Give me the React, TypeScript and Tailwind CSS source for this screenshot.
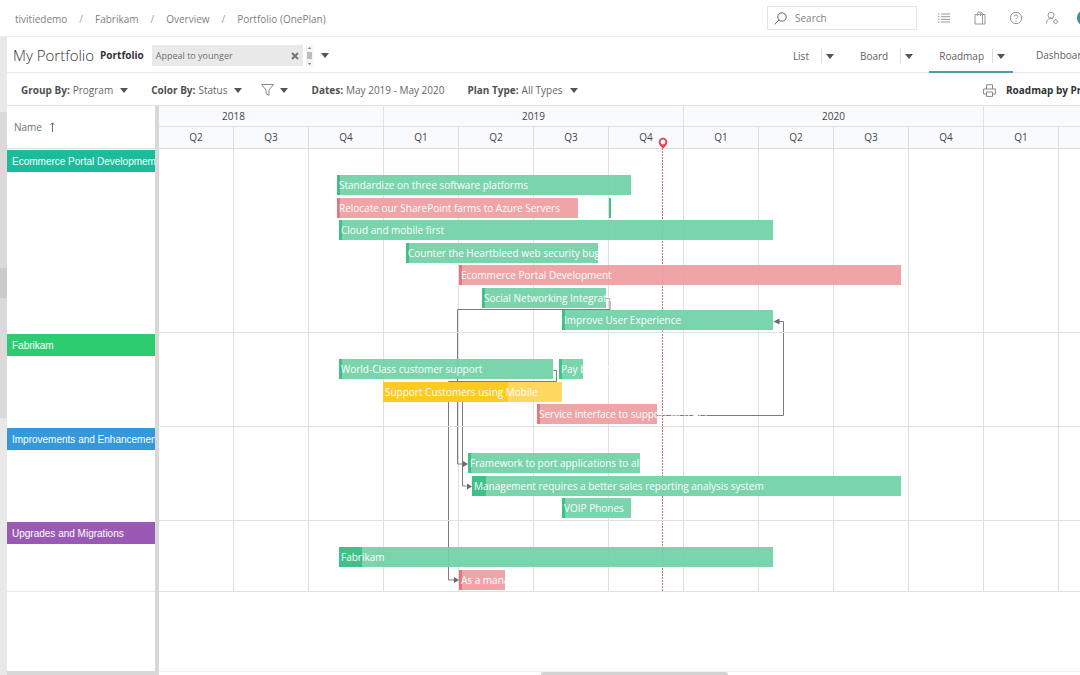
import type { ReactNode } from "react";

type Tone = "green" | "red" | "yellow";

interface Task {
  label: string;
  lane: number;
  start: number;
  end: number;
  tone: Tone;
  done?: number;
}

interface Group {
  name: string;
  header: string;
  height: string;
  offset: number;
  tasks: Task[];
}

const LANE = 22.5;

const tones: Record<Tone, { bar: string; done: string }> = {
  green: { bar: "bg-[#6fd0a5]/92", done: "bg-[#3fc088]" },
  red: { bar: "bg-[#ee9da0]/92", done: "bg-[#e2777c]" },
  yellow: { bar: "bg-[#ffd658]/95", done: "bg-[#fcc91d]/95" },
};

// start / end are timeline pixels, 75 to a quarter, counted from Q1 2018
const groups: Group[] = [
  {
    name: "Ecommerce Portal Developmemt",
    header: "bg-[#1abc9c]",
    height: "h-[184px]",
    offset: 26,
    tasks: [
      { label: "Standardize on three software platforms", lane: 0, start: 253, end: 547, tone: "green" },
      { label: "Relocate our SharePoint farms to Azure Servers", lane: 1, start: 253, end: 494, tone: "red" },
      { label: "", lane: 1, start: 525, end: 527, tone: "green", done: 2 },
      { label: "Cloud and mobile first", lane: 2, start: 255, end: 689, tone: "green" },
      { label: "Counter the Heartbleed web security bug", lane: 3, start: 322, end: 514, tone: "green" },
      { label: "Ecommerce Portal Development", lane: 4, start: 375, end: 817, tone: "red" },
      { label: "Social Networking Integration", lane: 5, start: 398, end: 522, tone: "green" },
      { label: "Improve User Experience", lane: 6, start: 478, end: 689, tone: "green" },
    ],
  },
  {
    name: "Fabrikam",
    header: "bg-[#2ecc71]",
    height: "h-[94px]",
    offset: 26,
    tasks: [
      { label: "World-Class customer support", lane: 0, start: 255, end: 469, tone: "green" },
      { label: "Pay by phone", lane: 0, start: 475, end: 499, tone: "green" },
      { label: "Support Customers using Mobile", lane: 1, start: 299, end: 478, tone: "yellow", done: 125 },
      { label: "Service interface to support web API", lane: 2, start: 453, end: 573, tone: "red" },
    ],
  },
  {
    name: "Improvements and Enhancements",
    header: "bg-[#3498db]",
    height: "h-[94px]",
    offset: 26,
    tasks: [
      { label: "Framework to port applications to all", lane: 0, start: 384, end: 556, tone: "green" },
      { label: "Management requires a better sales reporting analysis system", lane: 1, start: 388, end: 817, tone: "green", done: 14 },
      { label: "VOIP Phones", lane: 2, start: 478, end: 547, tone: "green" },
    ],
  },
  {
    name: "Upgrades and Migrations",
    header: "bg-[#9b59b6]",
    height: "h-[71px]",
    offset: 26,
    tasks: [
      { label: "Fabrikam", lane: 0, start: 255, end: 689, tone: "green", done: 23 },
      { label: "As a manager", lane: 1, start: 375, end: 421, tone: "red" },
    ],
  },
];

const years = ["2018", "2019", "2020", "2021"];
const quarters = ["Q1", "Q2", "Q3", "Q4"];

function Caret() {
  return (
    <svg viewBox="0 0 8 5" className="h-[5px] w-2 shrink-0 fill-[#555]">
      <path d="M0 0h8L4 5z" />
    </svg>
  );
}

function Breadcrumbs() {
  const crumbs = ["tivitiedemo", "Fabrikam", "Overview", "Portfolio (OnePlan)"];
  return (
    <nav className="flex items-center gap-3 pt-0.5 text-[10px] text-[#808080]">
      {crumbs.map((crumb, i) => (
        <span key={crumb} className="flex gap-3">
          {i > 0 ? <span className="text-[#a0a0a0]">/</span> : null}
          <a href="#">{crumb}</a>
        </span>
      ))}
    </nav>
  );
}

function IconButton({ label, children }: { label: string; children: ReactNode }) {
  return (
    <button type="button" aria-label={label} className="text-[#999]">
      <svg viewBox="0 0 14 14" className="size-[14px] overflow-visible" fill="none" stroke="currentColor">
        {children}
      </svg>
    </button>
  );
}

function TopBar() {
  return (
    <header className="flex h-9 shrink-0 items-center justify-between pl-[15px]">
      <Breadcrumbs />
      <div className="flex items-center">
        <label className="flex h-6 w-[150px] items-center gap-2 border border-[#e4e4e4] px-1.5">
          <svg viewBox="0 0 13 13" className="size-[13px] shrink-0" fill="none" stroke="#666" aria-hidden>
            <circle cx="8" cy="5" r="4.2" />
            <path d="M5 8 .6 12.4" />
          </svg>
          <input
            type="text"
            aria-label="Search"
            placeholder="Search"
            className="w-full min-w-0 text-[10px] outline-none placeholder:text-[#808080]"
          />
        </label>
        <div className="ml-5 flex items-center gap-[22px]">
          <IconButton label="Tasks">
            <path d="M1 3h1.5M4 3h9M1 5.700h1.500M4 5.700h9M1 8.400h1.500M4 8.400h9M1 11h1.500M4 11h9" />
          </IconButton>
          <IconButton label="Marketplace">
            <path d="M2 3.500h7.500v9.500H2zM9.500 3.500h2.500v9.500H9.500M4.500 5V2.500Q4.500 1 6 1t1.500 1.500V5M7.500 1Q9.500 1 9.500 3.500" />
          </IconButton>
          <IconButton label="Help">
            <circle cx="7" cy="7" r="5.700" />
            <path d="M5.200 5.600Q5.300 4 7 4t1.800 1.500Q8.800 6.400 7.700 7.100 7 7.600 7 8.400M7 9.400v1.100" />
          </IconButton>
          <IconButton label="User settings">
            <circle cx="6" cy="4.200" r="3" />
            <path d="M1.300 12.500Q1.800 7.400 6 7.300q1.300 0 2.300.7" />
            <circle cx="10.600" cy="10.600" r="1.800" />
            <path d="M10.600 8v1M10.600 12.200v1M8 10.600h1M12.200 10.600h1" />
          </IconButton>
          <span className="-ml-1 w-[3px] overflow-hidden">
            <span className="block size-4 rounded-full bg-[#3f8f95]" />
          </span>
        </div>
      </div>
    </header>
  );
}

function Tab({ name, active }: { name: string; active?: boolean }) {
  return (
    <div
      className={`-mb-px flex h-9 items-center border-b-2 pt-1 pr-2 pl-2.5 ${
        active ? "gap-2 border-[#4f9bb3]" : "gap-3 border-transparent"
      }`}
    >
      <button type="button">{name}</button>
      <button
        type="button"
        aria-label={`${name} views`}
        className="flex h-3.5 items-center border-l border-[#ddd] pl-1"
      >
        <Caret />
      </button>
    </div>
  );
}

function TitleBar() {
  return (
    <div className="flex h-[37px] shrink-0 items-center justify-between border-y border-[#e8e8e8] pl-1.5">
      <div className="flex items-center pt-0.5">
        <h1 className="text-[15px] font-light text-[#333]">My Portfolio</h1>
        <h2 className="ml-1.5 text-[10px] font-bold text-[#333]">Portfolio</h2>
        <div className="ml-2 flex h-[21px] w-[151px] items-center justify-between bg-[#e9e9e9] pr-1 pl-1 text-[9px] text-[#707070]">
          <span>Appeal to younger</span>
          <button type="button" aria-label="Remove filter">
            <svg viewBox="0 0 8 8" className="size-2" stroke="#777" strokeWidth="2">
              <path d="m1 1 6 6M7 1 1 7" />
            </svg>
          </button>
        </div>
        <svg viewBox="0 0 7 20" className="ml-[3px] h-5 w-[7px]" aria-hidden>
          <path d="M0 0h7v20H0z" fill="#f4f4f4" />
          <path d="M1 6h5v7H1z" fill="#bdbdbd" />
          <path d="m2 3 1.500-2L5 3zM2 17l1.500 2L5 17z" fill="#777" />
        </svg>
        <button type="button" aria-label="More filters" className="ml-2">
          <Caret />
        </button>
      </div>
      <div className="flex h-full items-end gap-2 text-[10px] whitespace-nowrap text-[#606060]">
        <Tab name="List" />
        <Tab name="Board" />
        <Tab name="Roadmap" active />
        <button type="button" className="h-9 w-[59px] pt-0.5 pl-[15px] text-left">Dashboard</button>
      </div>
    </div>
  );
}

function Filter({ label, value, caret = true }: { label: string; value: string; caret?: boolean }) {
  return (
    <button type="button" className="flex items-center gap-[3px]">
      <b className="font-bold text-[#505050]">{label}</b>
      {value}
      {caret ? <span className="ml-1"><Caret /></span> : null}
    </button>
  );
}

function FilterBar() {
  return (
    <div className="flex h-8 shrink-0 items-center justify-between overflow-hidden pt-0.5 pl-[14px] text-[10px] whitespace-nowrap text-[#666]">
      <div className="flex items-center gap-[23px]">
        <Filter label="Group By:" value="Program" />
        <Filter label="Color By:" value="Status" />
        <div className="-ml-1 flex items-center">
          <button type="button" aria-label="Filter" className="flex items-center gap-1.5">
            <svg viewBox="0 0 13 12" className="h-3 w-[13px]" fill="none" stroke="#888">
              <path d="M.6.5h11.800L8 6v5.200L5 9.500V6z" />
            </svg>
            <Caret />
          </button>
        </div>
        <Filter label="Dates:" value="May 2019 - May 2020" caret={false} />
        <Filter label="Plan Type:" value="All Types" />
      </div>
      <div className="flex items-center gap-2.5">
        <button type="button" aria-label="Print">
          <svg viewBox="0 0 13 13" className="size-[13px]" fill="none" stroke="#888">
            <path d="M3.500 5V.7h6V5M3.500 10H.6V5h11.800v5H9.500M3.500 8h6v4.400h-6z" />
          </svg>
        </button>
        <b className="w-[74px] text-[#333]">Roadmap by Program</b>
      </div>
    </div>
  );
}

function NamePane() {
  return (
    <aside className="flex w-[152px] shrink-0 flex-col border-r-4 border-b-4 border-[#d8d8d8]">
      <button
        type="button"
        className="flex h-[43px] shrink-0 items-center gap-2 border-b border-[#e0e0e0] pl-[7px] text-[10px] text-[#707070]"
      >
        Name
        <svg viewBox="0 0 5 10" className="h-2.5 w-[5px]" fill="none" stroke="#707070" aria-hidden>
          <path d="M2.500 10V1M.5 3 2.500.8 4.500 3" />
        </svg>
      </button>
      {groups.map((group, i) => (
        <section
          key={group.name}
          className={`overflow-hidden pt-px ${group.height} ${
            i === groups.length - 1 ? "border-b border-[#e8e8e8]" : ""
          }`}
        >
          <h3
            className={`flex h-[22px] items-center pl-[5px] font-['Liberation_Sans',Arial,sans-serif] text-[10px] whitespace-nowrap text-white ${group.header}`}
          >
            {group.name}
          </h3>
        </section>
      ))}
    </aside>
  );
}

function TaskBar({ task, offset }: { task: Task; offset: number }) {
  const tone = tones[task.tone];
  return (
    <div
      className={`absolute flex h-5 items-center ${tone.bar}`}
      style={{
        left: task.start,
        width: task.end - task.start,
        top: offset + Math.round(task.lane * LANE),
      }}
    >
      <div className={`absolute inset-y-0 left-0 ${tone.done}`} style={{ width: task.done ?? 3 }} />
      <span className="relative pl-0.5 text-[10px] whitespace-nowrap text-white">{task.label}</span>
    </div>
  );
}

// dependency arrows, drawn behind the bars
function Links() {
  return (
    <svg className="absolute inset-0 h-full w-full" fill="none" stroke="#7c7c7c" aria-hidden>
      <path d="M522.500 149.500h3.500v11H373.500v154.500h6" />
      <path d="M469.500 221.500h3v11h-108v198.500h6" />
      <path d="M378.500 244.500v92.500h4" />
      <path d="M573 266.500h126.500v-94h-5" />
      <path
        d="m384 315-5-3v6zM388 337.500l-5-3v6zM375 431l-5-3v6zM689.500 172.500l6-3v6z"
        fill="#6a6a6a"
        stroke="none"
      />
    </svg>
  );
}

function Timeline() {
  return (
    <div className="flex min-w-0 flex-1 flex-col overflow-hidden">
      <div className="-ml-[75px] flex h-[43px] shrink-0 bg-[#f9fafd] text-[10px] text-[#444]">
        {years.map((year) => (
          <div key={year} className="w-[300px] shrink-0">
            <div className="flex h-[21px] items-center justify-center border-r border-b border-[#e2e2e2]">
              {year}
            </div>
            <div className="flex h-[22px]">
              {quarters.map((quarter) => (
                <div
                  key={quarter}
                  className="flex flex-1 items-center justify-center border-r border-b border-[#dcdcdc]"
                >
                  {quarter}
                </div>
              ))}
            </div>
          </div>
        ))}
      </div>

      <div className="relative -ml-[75px]">
        <div className="absolute inset-0 flex overflow-hidden">
          {years.flatMap((year) =>
            quarters.map((quarter) => (
              <div key={year + quarter} className="w-[75px] shrink-0 border-r border-[#e0e0e0]" />
            )),
          )}
        </div>
        <Links />
        <svg viewBox="0 0 10 454" className="absolute -top-[12px] left-[574px] h-[454px] w-2.5" fill="none" aria-hidden>
          <path d="M4.500 11v443" stroke="#cf7474" strokeDasharray="2 1" />
          <path d="M.7 5a4.300 4.300 0 0 1 8.600 0Q9.300 8 5 11.500.7 8 .7 5z" fill="#e2484d" />
          <circle cx="5" cy="5" r="2.400" fill="#fff" />
        </svg>
        {groups.map((group) => (
          <section key={group.name} className={`relative border-b border-[#e0e0e0] ${group.height}`}>
            {group.tasks.map((task) => (
              <TaskBar key={`${task.lane}-${task.start}`} task={task} offset={group.offset} />
            ))}
          </section>
        ))}
      </div>

      <div className="mt-auto border-t border-[#f0f0f0] pl-[382px]">
        <div className="h-[3px] w-[187px] rounded-t bg-[#d2d2d2]" />
      </div>
    </div>
  );
}

export default function App() {
  return (
    <div className="flex h-screen flex-col overflow-hidden bg-white font-['Open_Sans','Noto_Sans',sans-serif]">
      <TopBar />
      <div className="flex min-h-0 flex-1">
        <div className="flex w-[7px] shrink-0 flex-col bg-[#e8e8e8] pt-[76px]">
          <div className="h-[156px] bg-[#dadada]" />
          <div className="h-[30px] bg-[#cbcbcb]" />
          <div className="h-[120px] bg-[#dadada]" />
        </div>
        <main className="flex min-w-0 flex-1 flex-col">
          <TitleBar />
          <FilterBar />
          <div className="flex min-h-0 flex-1 border-t border-[#e0e0e0]">
            <NamePane />
            <Timeline />
          </div>
        </main>
      </div>
    </div>
  );
}
